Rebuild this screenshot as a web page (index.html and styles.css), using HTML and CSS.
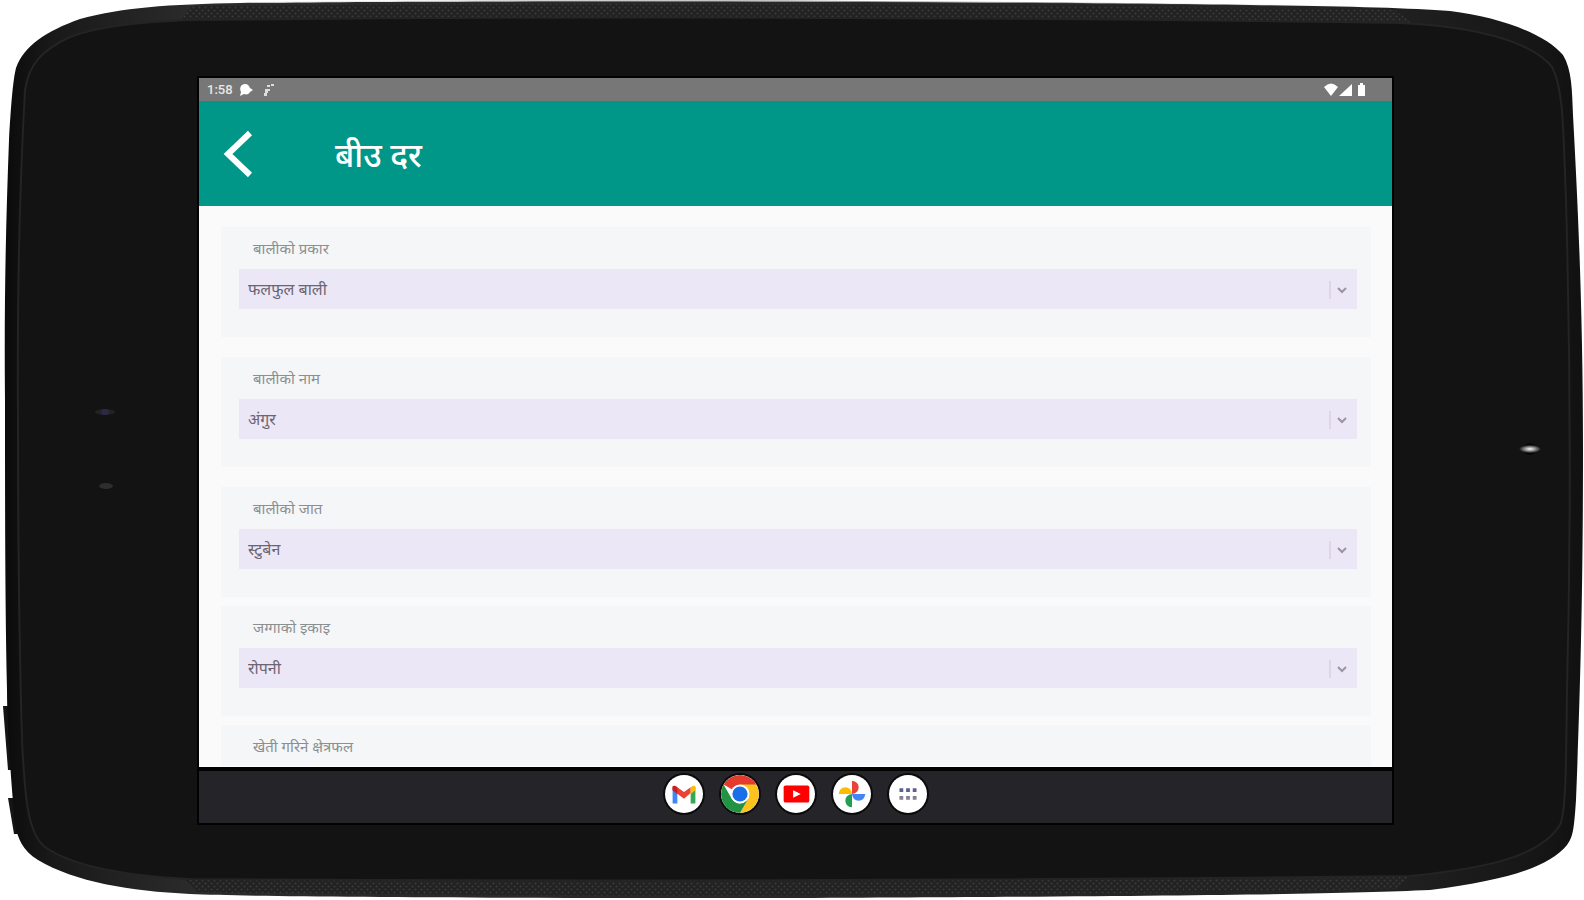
FILE: index.html
```html
<!DOCTYPE html>
<html lang="ne">
<head>
<meta charset="utf-8">
<meta name="viewport" content="width=device-width, initial-scale=1">
<title>बीउ दर</title>
<link rel="stylesheet" href="styles.css">
</head>
<body>
<div class="device">
  <svg class="shell" viewBox="0 0 1584 900" preserveAspectRatio="none" aria-hidden="true">
    <defs>
      <pattern id="mesh" width="6" height="6" patternUnits="userSpaceOnUse">
        <rect width="6" height="6" fill="#222"/>
        <circle cx="1.5" cy="1.5" r="1" fill="#3d3b3b"/>
        <circle cx="4.5" cy="4.5" r="1" fill="#3d3b3b"/>
      </pattern>
      <linearGradient id="rim" x1="0" x2="1" y1="0" y2="0">
        <stop offset="0" stop-color="#0b0b0b"/>
        <stop offset=".03" stop-color="#191919"/>
        <stop offset=".12" stop-color="#2b2b2b"/>
        <stop offset=".85" stop-color="#242424"/>
        <stop offset=".97" stop-color="#161616"/>
        <stop offset="1" stop-color="#111"/>
      </linearGradient>
      <radialGradient id="lens">
        <stop offset="0" stop-color="#fff"/>
        <stop offset=".45" stop-color="#999"/>
        <stop offset="1" stop-color="#131313"/>
      </radialGradient>
      <linearGradient id="shine" x1="0" x2="1" y1="0" y2="0">
        <stop offset="0" stop-color="#999" stop-opacity="0"/>
        <stop offset=".5" stop-color="#888"/>
        <stop offset="1" stop-color="#999" stop-opacity="0"/>
      </linearGradient>
    </defs>
    <path d="M3 706H14V770H8ZM8 798H20V834H14Z" fill="#151515"/>
    <path d="M5 400C4 300 6 220 9 140C11 105 13 80 16 68C24 46 46 31 80 19C120 8 170 4 240 3C500 0 1000 1 1250 5C1340 6 1410 8 1450 11C1500 17 1545 34 1563 55C1572 70 1572 90 1573 115C1577 190 1583 300 1583 450C1583 600 1580 700 1576 800C1574 830 1573 837 1567 845C1550 866 1510 880 1430 890C1340 894 1200 896 780 898C480 898 260 897 190 894C130 891 75 882 38 860C22 850 18 838 15 825C10 770 7 720 7 690C5 600 5 500 5 400Z" fill="url(#rim)"/>
    <path d="M230 2Q780-2 1350 6" fill="none" stroke="url(#shine)"/>
    <path d="M180 21L192 6Q780 1 1395 10L1412 23Q780 16 180 21ZM184 879L198 892Q780 900 1396 889L1410 876Q780 883 184 879Z" fill="url(#mesh)"/>
    <path d="M18 420C17 300 20 180 25 90C29 64 42 50 70 37C100 26 140 22 190 20Q780 14 1400 23C1470 26 1530 40 1552 67C1564 90 1563 130 1566 200Q1573 450 1567 690C1566 770 1566 810 1560 825C1540 856 1490 868 1410 876Q780 883 190 879C130 876 75 868 45 847C28 834 25 800 22 740Q18 600 18 420Z" fill="#131313" stroke="#242424" stroke-width="2"/>
    <ellipse cx="105" cy="412" rx="10" ry="3" fill="#232325"/>
    <ellipse cx="105" cy="412" rx="4" ry="3" fill="#2b2945"/>
    <ellipse cx="106" cy="486" rx="7" ry="3" fill="#2e2e2e"/>
    <ellipse cx="1530" cy="449" rx="6" ry="6" fill="#060606"/>
    <ellipse cx="1530" cy="449" rx="11" ry="4" fill="url(#lens)"/>
  </svg>

  <div class="screen">
    <div class="status">
      <span class="clock">1:58</span>
      <svg class="status-icon" viewBox="0 0 14 12"><path d="M6 0C9 0 10 2 11 4L14 6L11 8C10 10 8 11 5 10L1 12L2 8C0 4 2 0 6 0Z"/></svg>
      <svg class="status-icon note" viewBox="0 0 14 12"><path d="M6 1H9V3H6ZM10 0H13V2H10ZM4 5H9V7H7V9H4ZM3 9H6V12H3Z"/></svg>
      <svg class="signals" viewBox="0 0 43 14"><path d="M0 4Q7-3 14 4L7 13ZM15 13L28 1V13ZM34 2H36V0H39V2H41V13H34Z"/></svg>
    </div>

    <header class="appbar">
      <button class="back" type="button" aria-label="Back">
        <svg viewBox="0 0 30 48"><path d="M27 3L5 24L27 45"/></svg>
      </button>
      <h1 class="title">बीउ दर</h1>
    </header>

    <main class="form">
      <div class="card spaced">
        <label class="label" for="type">बालीको प्रकार</label>
        <div class="field">
          <select class="select" id="type"><option>फलफुल बाली</option></select>
          <svg class="chevron" viewBox="0 0 20 20"><path class="bar" d="M1 2V20"/><path d="M9 9L13 13L17 9"/></svg>
        </div>
      </div>
      <div class="card spaced">
        <label class="label" for="name">बालीको नाम</label>
        <div class="field">
          <select class="select" id="name"><option>अंगुर</option></select>
          <svg class="chevron" viewBox="0 0 20 20"><path class="bar" d="M1 2V20"/><path d="M9 9L13 13L17 9"/></svg>
        </div>
      </div>
      <div class="card">
        <label class="label" for="variety">बालीको जात</label>
        <div class="field">
          <select class="select" id="variety"><option>स्टुबेन</option></select>
          <svg class="chevron" viewBox="0 0 20 20"><path class="bar" d="M1 2V20"/><path d="M9 9L13 13L17 9"/></svg>
        </div>
      </div>
      <div class="card">
        <label class="label" for="unit">जग्गाको इकाइ</label>
        <div class="field">
          <select class="select" id="unit"><option>रोपनी</option></select>
          <svg class="chevron" viewBox="0 0 20 20"><path class="bar" d="M1 2V20"/><path d="M9 9L13 13L17 9"/></svg>
        </div>
      </div>
      <div class="card">
        <label class="label" for="area">खेती गरिने क्षेत्रफल</label>
        <div class="field"><input class="select" id="area" type="text"></div>
      </div>
    </main>

    <nav class="dock">
      <button class="app" type="button" aria-label="Gmail">
        <svg viewBox="0 0 40 40"><path fill="#4285f4" d="M8 13L13 17V30H8Z"/><path fill="#34a853" d="M32 13L27 17V30H32Z"/><path fill="#ea4335" d="M8 12Q10 10 13 13L20 18L27 13V19L20 25L8 16Z"/><path fill="#c5221f" d="M8 12Q10 10 13 13V20L8 16Z"/><path fill="#fbbc04" d="M27 13Q30 10 32 12V16L27 20Z"/></svg>
      </button>
      <button class="app" type="button" aria-label="Chrome">
        <svg viewBox="0 0 40 40"><path fill="#e33b2e" d="M20 20L2.700 10A20 20 0 0 1 37.300 10Z"/><path fill="#fcc31e" d="M20 10H37.300A20 20 0 0 1 20 40L28.700 25Z"/><path fill="#229342" d="M2.700 10L11.300 25Q15 30 20 30L28.700 25L20 40A20 20 0 0 1 2.700 10Z"/><circle cx="20" cy="20" r="10" fill="#fff"/><circle cx="20" cy="20" r="8" fill="#1a6fe8"/></svg>
      </button>
      <button class="app" type="button" aria-label="YouTube">
        <svg viewBox="0 0 40 40"><rect x="7" y="11" width="27" height="18" rx="2" fill="#f00"/><path fill="#fff" d="M17 16L25 20L17 24Z"/></svg>
      </button>
      <button class="app" type="button" aria-label="Photos">
        <svg viewBox="0 0 40 40"><path fill="#ea4335" d="M20 6Q27 7 27 13Q27 19 20 20Z"/><path fill="#4285f4" d="M34 20Q33 27 27 27Q21 27 20 20Z"/><path fill="#22a052" d="M20 34Q13 33 13 27Q13 21 20 20Z"/><path fill="#fbbc04" d="M6 20Q7 13 13 13Q19 13 20 20Z"/></svg>
      </button>
      <button class="app" type="button" aria-label="All apps">
        <svg viewBox="0 0 40 40"><path fill="#59618f" d="M11 14H15V18H11ZM18 14H22V18H18ZM25 14H29V18H25Z"/><path fill="#868094" d="M11 22H15V26H11ZM18 22H22V26H18ZM25 22H29V26H25Z"/></svg>
      </button>
    </nav>
  </div>
</div>
</body>
</html>
```
FILE: styles.css
```css
* { box-sizing: border-box; }

body {
  margin: 0;
  background: #fff;
  font-family: "Noto Sans", "Liberation Sans", sans-serif;
}

.device {
  position: relative;
  display: grid;
  grid-template-columns: 199fr 1193fr 192fr;
  height: 100vh;
  padding: 78px 0 77px;
}

.shell {
  position: absolute;
  inset: 0;
  width: 100%;
  height: 100%;
}

.screen {
  position: relative;
  grid-column: 2;
  display: flex;
  flex-direction: column;
  min-height: 0;
  background: #fafafa;
  box-shadow: 0 0 0 2px #020202;
}

.status {
  display: flex;
  align-items: center;
  gap: 6px;
  height: 23px;
  flex: none;
  padding: 0 25px 0 8px;
  background: #777;
  color: #e8e8e8;
}

.clock {
  font: 500 13px/23px Roboto, sans-serif;
}

.status-icon { width: 14px; height: 12px; fill: #fff; }
.note { margin-left: 2px; fill: #ddd; }
.signals { width: 43px; height: 14px; margin-left: auto; fill: #fff; }

.appbar {
  display: flex;
  align-items: center;
  gap: 82px;
  height: 105px;
  flex: none;
  padding: 0 24px;
  background: #009788;
  color: #fff;
}

.back {
  display: flex;
  padding: 0;
  border: 0;
  background: none;
}

.back svg {
  width: 30px;
  height: 48px;
  fill: none;
  stroke: #fff;
  stroke-width: 6;
}

.title {
  margin: 0;
  padding-top: 2px;
  font-size: 33px;
  line-height: 48px;
  font-weight: 500;
}

.form {
  display: flex;
  flex-direction: column;
  gap: 9px;
  flex: 1;
  min-height: 0;
  overflow: hidden;
  padding: 21px 21px 0 22px;
  border-bottom: 1px solid #fff;
}

.card {
  flex: none;
  padding: 11px 14px 28px 18px;
  background: #f4f6f8;
}

.spaced { margin-bottom: 11px; }

.label {
  display: block;
  padding: 0 14px;
  margin-bottom: 11px;
  font-size: 15px;
  line-height: 20px;
  color: #8c8f90;
}

.field {
  display: grid;
  align-items: center;
  background: #ece7f6;
}

.select {
  grid-area: 1 / 1;
  width: 100%;
  height: 40px;
  padding: 0 32px 0 9px;
  border: 0;
  appearance: none;
  background: none;
  font: inherit;
  font-size: 16px;
  color: #6b6572;
}

.chevron {
  grid-area: 1 / 1;
  justify-self: end;
  width: 20px;
  height: 20px;
  margin-right: 8px;
  fill: none;
  stroke: #9a95a3;
  stroke-width: 2;
  pointer-events: none;
}

.bar { stroke: #dcd7e3; }

.dock {
  display: flex;
  justify-content: center;
  align-items: center;
  gap: 18px;
  height: 56px;
  flex: none;
  padding-bottom: 6px;
  border-top: 4px solid #020202;
  background: #242429;
}

.app {
  width: 38px;
  height: 38px;
  padding: 0;
  border: 0;
  border-radius: 50%;
  overflow: hidden;
  background: #fff;
  box-shadow: 0 0 0 2px #0b0b0d;
}

.app svg { display: block; width: 100%; height: 100%; }
```
